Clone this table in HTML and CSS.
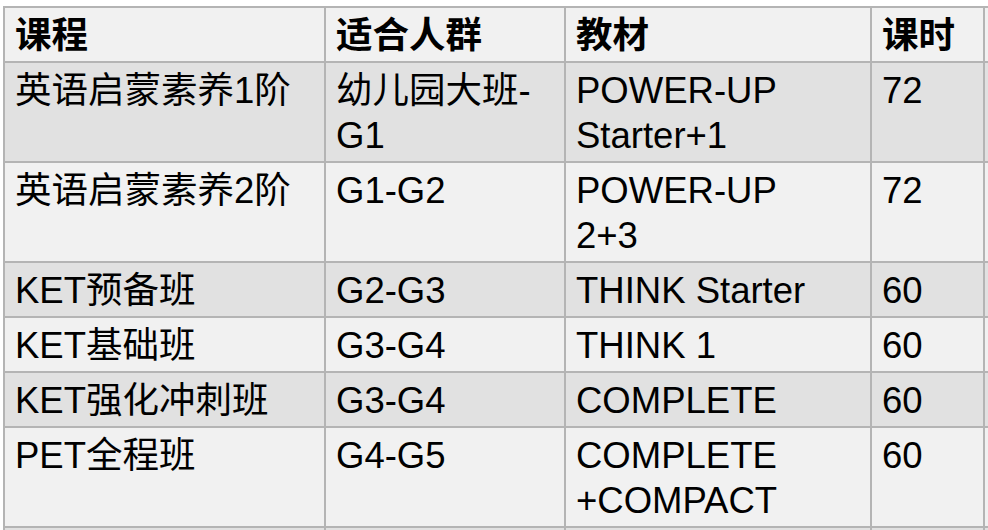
FILE: index.html
```html
<!DOCTYPE html>
<html lang="zh-CN">
<head>
<meta charset="utf-8">
<title>课程表</title>
<link rel="stylesheet" href="styles.css">
</head>
<body>
<div class="page">
  <table class="courses">
    <colgroup>
      <col class="c1"><col class="c2"><col class="c3"><col class="c4"><col class="c5">
    </colgroup>
    <thead>
      <tr class="light">
        <th>课程</th><th>适合人群</th><th>教材</th><th>课时</th><th></th>
      </tr>
    </thead>
    <tbody>
      <tr class="dark"><td>英语启蒙素养1阶</td><td>幼儿园大班-<br>G1</td><td>POWER-UP<br>Starter+1</td><td>72</td><td></td></tr>
      <tr class="light"><td>英语启蒙素养2阶</td><td>G1-G2</td><td>POWER-UP<br>2+3</td><td>72</td><td></td></tr>
      <tr class="dark"><td>KET预备班</td><td>G2-G3</td><td>THINK Starter</td><td>60</td><td></td></tr>
      <tr class="light"><td>KET基础班</td><td>G3-G4</td><td>THINK 1</td><td>60</td><td></td></tr>
      <tr class="dark"><td>KET强化冲刺班</td><td>G3-G4</td><td>COMPLETE</td><td>60</td><td></td></tr>
      <tr class="light"><td>PET全程班</td><td>G4-G5</td><td>COMPLETE<br>+COMPACT</td><td>60</td><td></td></tr>
      <tr class="dark"><td>&nbsp;</td><td></td><td></td><td></td><td></td></tr>
    </tbody>
  </table>
</div>
</body>
</html>
```

FILE: styles.css
```css
html, body {
  margin: 0;
  padding: 0;
  background: #ffffff;
  overflow: hidden;
}
.page {
  width: 988px;
  height: 530px;
  overflow: hidden;
  padding: 6px 0 0 3px;
  box-sizing: border-box;
}
.courses {
  border-collapse: collapse;
  table-layout: fixed;
  width: 1280px;
  font-family: "Liberation Sans", "Noto Sans CJK SC", sans-serif;
  font-size: 36.5px;
  line-height: 45px;
  color: #000000;
}
.c1 { width: 321px; }
.c2 { width: 240px; }
.c3 { width: 306px; }
.c4 { width: 113px; }
.c5 { width: 300px; }
.courses th,
.courses td {
  border: 2px solid #b4b4b4;
  padding: 5px 6px 3px 10px;
  text-align: left;
  vertical-align: top;
  white-space: nowrap;
  overflow: hidden;
}
.courses th {
  font-weight: bold;
}
.light { background: #f1f1f1; }
.dark { background: #e1e1e1; }
```
